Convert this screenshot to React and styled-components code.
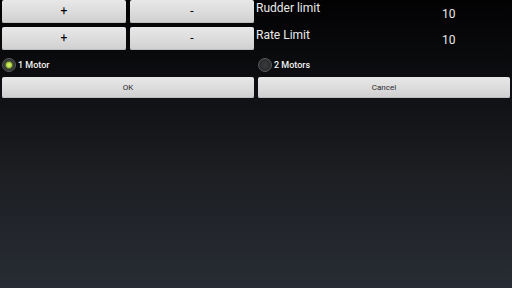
import React, { useState } from "react";
import styled, { createGlobalStyle } from "styled-components";

const Global = createGlobalStyle`
  html, body {
    margin: 0;
    padding: 0;
    height: 100%;
  }
  body {
    font-family: Roboto, "Liberation Sans", sans-serif;
  }
  #root {
    height: 100%;
  }
`;

const Screen = styled.div`
  width: 512px;
  height: 288px;
  overflow: hidden;
  background: linear-gradient(180deg, #020203 0%, #0e0f12 30%, #1c1e22 60%, #282c34 100%);
  display: flex;
  flex-direction: column;
`;

const SettingRow = styled.div`
  display: grid;
  grid-template-columns: 124px 124px 1fr;
  column-gap: 4px;
  padding: 0 2px;
  height: 27px;
`;

const StepButton = styled.button`
  height: 23px;
  margin: 0;
  padding: 0;
  border: none;
  border-radius: 2px;
  background: linear-gradient(180deg, #e8e8e8 0%, #dadada 60%, #cfcfcf 100%);
  box-shadow: inset 0 -1px 0 #bdbdbd;
  color: #000;
  font-family: Roboto, "Liberation Sans", sans-serif;
  font-size: 12px;
  line-height: 23px;
`;

const Setting = styled.div`
  position: relative;
  color: #eaeaea;
  margin-left: -2px;
`;

const Label = styled.div`
  font-size: 12px;
  line-height: 14px;
  padding-top: ${(p) => p.top}px;
`;

const Value = styled.div`
  position: absolute;
  left: 186px;
  top: ${(p) => p.top}px;
  font-size: 12px;
  line-height: 14px;
`;

const RadioRow = styled.div`
  display: grid;
  grid-template-columns: 256px 1fr;
  height: 22px;
  align-items: center;
`;

const RadioItem = styled.label`
  display: flex;
  align-items: center;
  gap: 2px;
  padding-left: 2px;
  color: #f2f2f2;
  font-size: 9px;
  font-weight: 500;
  cursor: pointer;
`;

const Dot = styled.span`
  width: 12px;
  height: 12px;
  border-radius: 50%;
  border: 1.5px solid #5a5d60;
  background: radial-gradient(circle, #3a3c3e 0%, #222425 100%);
  display: flex;
  align-items: center;
  justify-content: center;
  &::after {
    content: "";
    width: 6px;
    height: 6px;
    border-radius: 50%;
    background: ${(p) => (p.on ? "radial-gradient(circle, #d6f26a 0%, #9cc92a 100%)" : "transparent")};
    box-shadow: ${(p) => (p.on ? "0 0 3px #b9e24a" : "none")};
  }
`;

const ActionRow = styled.div`
  display: grid;
  grid-template-columns: 1fr 1fr;
  column-gap: 4px;
  padding: 1px 2px 0;
`;

const ActionButton = styled(StepButton)`
  height: 21px;
  line-height: 21px;
  font-size: 8px;
  color: #2a2a2a;
`;

export default function App() {
  const [motors, setMotors] = useState(1);
  const settings = [
    { label: "Rudder limit", value: 10, top: 1, vtop: 7 },
    { label: "Rate Limit", value: 10, top: 1, vtop: 6 },
  ];

  return (
    <>
      <Global />
      <Screen>
        {settings.map((s) => (
          <SettingRow key={s.label}>
            <StepButton>+</StepButton>
            <StepButton>-</StepButton>
            <Setting>
              <Label top={s.top}>{s.label}</Label>
              <Value top={s.vtop}>{s.value}</Value>
            </Setting>
          </SettingRow>
        ))}
        <RadioRow>
          <RadioItem onClick={() => setMotors(1)}>
            <Dot on={motors === 1} />1 Motor
          </RadioItem>
          <RadioItem onClick={() => setMotors(2)}>
            <Dot on={motors === 2} />2 Motors
          </RadioItem>
        </RadioRow>
        <ActionRow>
          <ActionButton>OK</ActionButton>
          <ActionButton>Cancel</ActionButton>
        </ActionRow>
      </Screen>
    </>
  );
}
